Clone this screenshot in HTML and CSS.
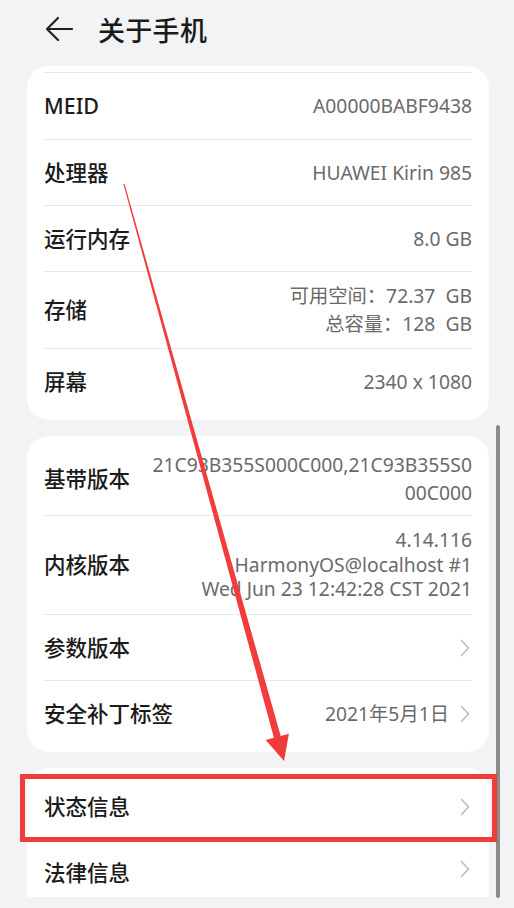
FILE: index.html
```html
<!DOCTYPE html>
<html lang="zh-CN">
<head>
<meta charset="utf-8">
<title>关于手机</title>
<link rel="stylesheet" href="styles.css">
</head>
<body>
<div class="page">
  <header class="header">
    <svg class="back" width="28" height="24" viewBox="0 0 28 24"><path d="M27 12H2M13 1L2 12l11 11" fill="none" stroke="#222" stroke-width="2.2" stroke-linecap="round" stroke-linejoin="round"/></svg>
    <h1 class="title">关于手机</h1>
  </header>

  <section class="card card-first">
    <div class="row row-divided"><span class="label">MEID</span><span class="value">A00000BABF9438</span></div>
    <div class="row row-divided"><span class="label">处理器</span><span class="value">HUAWEI Kirin 985</span></div>
    <div class="row row-divided"><span class="label">运行内存</span><span class="value">8.0 GB</span></div>
    <div class="row row-divided row-storage"><span class="label">存储</span><span class="value value-lines">可用空间：72.37&nbsp; GB<br>总容量：128&nbsp; GB</span></div>
    <div class="row row-divided"><span class="label">屏幕</span><span class="value">2340 x 1080</span></div>
  </section>

  <section class="card">
    <div class="row row-baseband"><span class="label">基带版本</span><span class="value value-lines">21C93B355S000C000,21C93B355S0<br>00C000</span></div>
    <div class="row row-divided row-kernel"><span class="label">内核版本</span><span class="value value-kernel">4.14.116<br>HarmonyOS@localhost #1<br>Wed Jun 23 12:42:28 CST 2021</span></div>
    <div class="row row-divided"><span class="label">参数版本</span><span class="value"><svg class="chev" width="10" height="18" viewBox="0 0 10 18"><path d="M1.5 1.5L8.5 9l-7 7.5" fill="none" stroke="#bdbdbd" stroke-width="1.6" stroke-linecap="round" stroke-linejoin="round"/></svg></span></div>
    <div class="row row-divided"><span class="label">安全补丁标签</span><span class="value">2021年5月1日<svg class="chev" width="10" height="18" viewBox="0 0 10 18"><path d="M1.5 1.5L8.5 9l-7 7.5" fill="none" stroke="#bdbdbd" stroke-width="1.6" stroke-linecap="round" stroke-linejoin="round"/></svg></span></div>
  </section>

  <section class="card card-last">
    <div class="row"><span class="label">状态信息</span><span class="value"><svg class="chev" width="10" height="18" viewBox="0 0 10 18"><path d="M1.5 1.5L8.5 9l-7 7.5" fill="none" stroke="#bdbdbd" stroke-width="1.6" stroke-linecap="round" stroke-linejoin="round"/></svg></span></div>
    <div class="row row-divided row-cut"><span class="label">法律信息</span><span class="value"><svg class="chev" width="10" height="18" viewBox="0 0 10 18"><path d="M1.5 1.5L8.5 9l-7 7.5" fill="none" stroke="#bdbdbd" stroke-width="1.6" stroke-linecap="round" stroke-linejoin="round"/></svg></span></div>
  </section>

  <div class="scrollbar"></div>
  <div class="highlight-box"></div>
  <svg class="annotation" width="514" height="908" viewBox="0 0 514 908">
    <polygon points="124.6,183.9 280.7,736.0 288.9,733.7 284,761 265.7,740.1 273.9,737.8 123.4,184.1" fill="#f23b3b"/>
  </svg>
</div>
</body>
</html>
```
FILE: styles.css
```css
html, body {
  margin: 0;
  padding: 0;
}
body {
  background: #f1f3f5;
  font-family: "Noto Sans", "Noto Sans CJK SC", sans-serif;
  color: #1b1b1b;
}
.page {
  position: relative;
  width: 514px;
  height: 908px;
  overflow: hidden;
}
.header {
  height: 58px;
  display: flex;
  align-items: center;
  gap: 25px;
  padding-left: 45px;
}
.back {
  display: block;
}
.title {
  margin: 0;
  font-size: 27px;
  font-weight: 500;
  color: #1a1a1a;
  letter-spacing: 0.3px;
}
.card {
  margin: 16px 25px 0 27px;
  background: #ffffff;
  border-radius: 22px;
  padding: 6px 17px;
}
.card-first {
  margin-top: 8px;
}
.card-last {
  padding-bottom: 0;
  border-radius: 22px 22px 0 0;
}
.row {
  display: flex;
  align-items: center;
  justify-content: space-between;
  height: 66px;
  box-sizing: border-box;
}
.row-divided {
  border-top: 1px solid #e9e9ea;
}
.card-first .row:first-child {
  height: 67px;
}
.row-storage {
  height: 77px;
}
.row-baseband {
  height: 73px;
}
.row-kernel {
  height: 99px;
}
.row-cut {
  height: 57px;
  align-items: flex-start;
  padding-top: 19px;
}
.label {
  font-size: 21.5px;
  font-weight: 500;
  color: #1b1b1b;
  white-space: nowrap;
  line-height: 26px;
}
.value {
  display: flex;
  align-items: center;
  gap: 11px;
  font-size: 19.3px;
  color: #6a6a6a;
  text-align: right;
  white-space: nowrap;
  line-height: 26px;
}
.value-lines {
  display: block;
  line-height: 28px;
}
.value-kernel {
  display: block;
  line-height: 24.5px;
}
.chev {
  display: block;
  margin-right: 2px;
}
.scrollbar {
  position: absolute;
  left: 496px;
  top: 425px;
  width: 4px;
  height: 473px;
  border-radius: 2px;
  background: #8b8b8b;
}
.highlight-box {
  position: absolute;
  left: 20px;
  top: 774px;
  width: 477px;
  height: 68px;
  box-sizing: border-box;
  border: 5px solid #f23b3b;
}
.annotation {
  position: absolute;
  left: 0;
  top: 0;
  pointer-events: none;
}
```
